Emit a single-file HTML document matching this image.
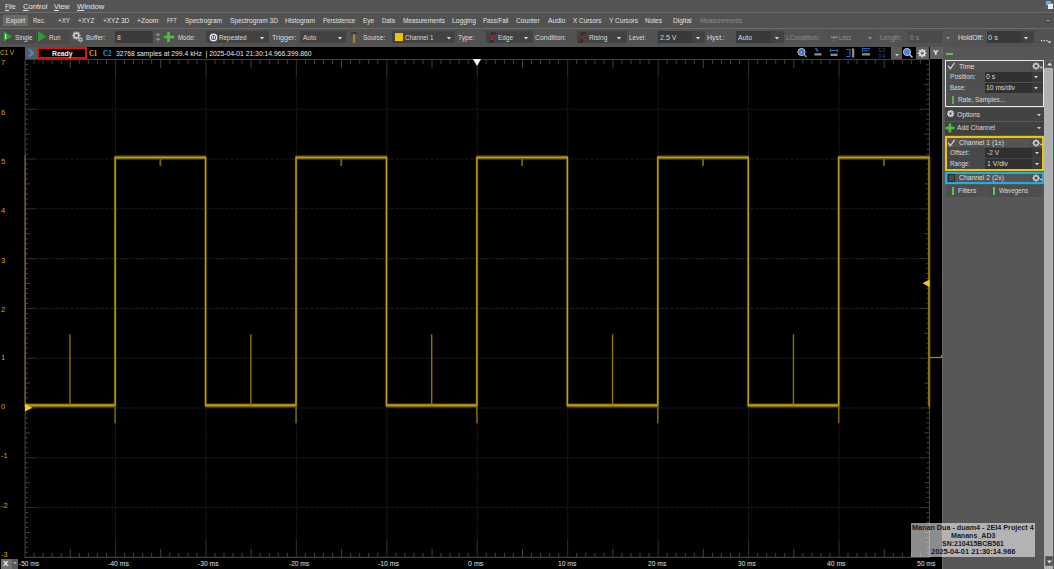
<!DOCTYPE html>
<html><head><meta charset="utf-8"><style>
html,body{margin:0;padding:0;}
body{width:1054px;height:569px;overflow:hidden;position:relative;background:#555;font-family:"Liberation Sans",sans-serif;}
.t{position:absolute;white-space:pre;line-height:1;transform-origin:0 0;}
svg{overflow:visible}
</style></head><body>
<div style="position:absolute;left:0px;top:0px;width:1054px;height:12px;background:#555555"></div><div style="position:absolute;left:0px;top:12px;width:1054px;height:1px;background:#6b6b6b"></div><div style="position:absolute;left:0px;top:13px;width:1054px;height:15px;background:#525252"></div><div style="position:absolute;left:0px;top:28px;width:1054px;height:1px;background:#6b6b6b"></div><div style="position:absolute;left:0px;top:29px;width:1054px;height:18px;background:#525252"></div><div style="position:absolute;left:1045px;top:0.5px;width:9px;height:8.5px;background:#5c5c5c"></div><div style="position:absolute;left:1046px;top:1.2px;width:5px;height:4px;background:#7fa4e0"></div><div style="position:absolute;left:1047.8px;top:3.2px;width:5px;height:4.6px;background:#e8eef8;border-top:1px solid #6b93d6"></div><div style="position:absolute;left:3px;top:15px;width:25px;height:11px;background:#6a6a6a"></div><div style="position:absolute;left:1047px;top:20px;width:2.2px;height:1.2px;background:#a8a8b0"></div><div style="position:absolute;left:2px;top:30px;width:34px;height:14px;background:#4a4a4a;border-radius:1px"></div><div style="position:absolute;left:37px;top:30px;width:33px;height:14px;background:#4a4a4a;border-radius:1px"></div><div style="position:absolute;left:115px;top:31px;width:38px;height:12px;background:#3a3a3a"></div><div style="position:absolute;left:206px;top:31px;width:63px;height:12px;background:#424242"></div><div style="position:absolute;left:300px;top:31px;width:46px;height:12px;background:#424242"></div><div style="position:absolute;left:392px;top:31px;width:63px;height:12px;background:#424242"></div><div style="position:absolute;left:394.7px;top:33px;width:8px;height:8px;background:#f2c400"></div><div style="position:absolute;left:486px;top:31px;width:46.5px;height:12px;background:#424242"></div><div style="position:absolute;left:577px;top:31px;width:49.5px;height:12px;background:#424242"></div><div style="position:absolute;left:658px;top:31px;width:34px;height:12px;background:#393939"></div><div style="position:absolute;left:692px;top:31px;width:12.5px;height:12px;background:#424242"></div><div style="position:absolute;left:736px;top:31px;width:35px;height:12px;background:#393939"></div><div style="position:absolute;left:771px;top:31px;width:12.5px;height:12px;background:#424242"></div><div style="position:absolute;left:827px;top:31px;width:49.5px;height:12px;background:#505050"></div><div style="position:absolute;left:908px;top:31px;width:34px;height:12px;background:#4a4a4a"></div><div style="position:absolute;left:942px;top:31px;width:12px;height:12px;background:#545454"></div><div style="position:absolute;left:986.5px;top:31px;width:34.5px;height:12px;background:#393939"></div><div style="position:absolute;left:1021px;top:31px;width:12.5px;height:12px;background:#424242"></div><div style="position:absolute;left:0px;top:47px;width:942px;height:522px;background:#000"></div><div style="position:absolute;left:25px;top:47px;width:12px;height:12px;background:#5a5a5a"></div><div style="position:absolute;left:37px;top:47px;width:50px;height:12px;background:#000;box-sizing:border-box;border:2px solid #e01010"></div><div style="position:absolute;left:891px;top:47px;width:11px;height:12px;background:#5a5a5a"></div><div style="position:absolute;left:916px;top:47px;width:13px;height:12px;background:#606060"></div><div style="position:absolute;left:930px;top:47px;width:12px;height:12px;background:#606060"></div><div style="position:absolute;left:942px;top:47px;width:112px;height:522px;background:#575757"></div><div style="position:absolute;left:942px;top:47px;width:1px;height:522px;background:#656565"></div><div style="position:absolute;left:946px;top:53px;width:7px;height:2px;background:#5cc04a"></div><div style="position:absolute;left:1044.2px;top:67.5px;width:8.6px;height:502px;background-color:#a6a6a6;background-image:linear-gradient(45deg,#bababa 25%,transparent 25%,transparent 75%,#bababa 75%),linear-gradient(45deg,#bababa 25%,transparent 25%,transparent 75%,#bababa 75%);background-size:2px 2px;background-position:0 0,1px 1px"></div><div style="position:absolute;left:1045px;top:60px;width:7px;height:7.5px;background:#505050;box-sizing:border-box;border:1px solid #686868"></div><div style="position:absolute;left:1044.5px;top:556px;width:8px;height:10px;background:#505050;box-sizing:border-box;border:1px solid #6a6a6a"></div><div style="position:absolute;left:945px;top:60px;width:99px;height:47px;box-sizing:border-box;border:1px solid #e8e8e8;background:#4f4f4f"></div><div style="position:absolute;left:946px;top:61px;width:97px;height:10px;background:#525252"></div><div style="position:absolute;left:1030.4px;top:62px;width:11.3px;height:7.5px;background:#4e4e4e"></div><div style="position:absolute;left:984.5px;top:71.5px;width:47px;height:10px;background:#303030"></div><div style="position:absolute;left:1031.5px;top:71.5px;width:11px;height:10px;background:#3a3a3a"></div><div style="position:absolute;left:984.5px;top:82.5px;width:47px;height:10px;background:#303030"></div><div style="position:absolute;left:1031.5px;top:82.5px;width:11px;height:10px;background:#3a3a3a"></div><div style="position:absolute;left:946px;top:94px;width:97px;height:12px;background:#505050"></div><div style="position:absolute;left:952px;top:96px;width:2px;height:8px;background:#56b046"></div><div style="position:absolute;left:945px;top:108px;width:99px;height:12.5px;background:#434343"></div><div style="position:absolute;left:945px;top:121.5px;width:99px;height:13px;background:#404040"></div><div style="position:absolute;left:945px;top:136px;width:99px;height:35px;box-sizing:border-box;border:2px solid #f0c400;background:#484848"></div><div style="position:absolute;left:947px;top:138px;width:95px;height:9px;background:#555"></div><div style="position:absolute;left:1030.4px;top:138.5px;width:11.3px;height:8px;background:#4e4e4e"></div><div style="position:absolute;left:985px;top:148px;width:47px;height:10px;background:#303030"></div><div style="position:absolute;left:1032px;top:148px;width:10px;height:10px;background:#3a3a3a"></div><div style="position:absolute;left:985px;top:159px;width:47px;height:10px;background:#303030"></div><div style="position:absolute;left:1032px;top:159px;width:10px;height:10px;background:#3a3a3a"></div><div style="position:absolute;left:945px;top:171.5px;width:99px;height:12px;box-sizing:border-box;border:2px solid #18b0e8;background:#555"></div><div style="position:absolute;left:948px;top:173.5px;width:7px;height:8px;box-sizing:border-box;border:1px solid #2a2a2a;background:#4a4a4a"></div><div style="position:absolute;left:1030.4px;top:173.5px;width:11.3px;height:8px;background:#4e4e4e"></div><div style="position:absolute;left:946px;top:185px;width:39px;height:12px;background:#4e4e4e"></div><div style="position:absolute;left:986px;top:185px;width:57px;height:12px;background:#4e4e4e"></div><div style="position:absolute;left:952px;top:186.5px;width:2px;height:8px;background:#5cc04a"></div><div style="position:absolute;left:992.5px;top:186.5px;width:2px;height:8px;background:#5cc04a"></div><div style="position:absolute;left:1px;top:559px;width:11px;height:10px;background:#707070"></div><div style="position:absolute;left:12px;top:559px;width:6px;height:10px;background:#5a5a5a"></div>
<svg style="position:absolute;left:0;top:0" width="942" height="569"><line x1="115.50" y1="76.45" x2="115.50" y2="540.35" stroke="#1a1a1a" stroke-width="1.1" stroke-dasharray="4,1"/><line x1="115.50" y1="59.45" x2="115.50" y2="76.45" stroke="#2e2e2e" stroke-width="1.1"/><line x1="115.50" y1="540.35" x2="115.50" y2="557.35" stroke="#2e2e2e" stroke-width="1.1"/><line x1="205.94" y1="76.45" x2="205.94" y2="540.35" stroke="#1a1a1a" stroke-width="1.1" stroke-dasharray="4,1"/><line x1="205.94" y1="59.45" x2="205.94" y2="76.45" stroke="#2e2e2e" stroke-width="1.1"/><line x1="205.94" y1="540.35" x2="205.94" y2="557.35" stroke="#2e2e2e" stroke-width="1.1"/><line x1="296.38" y1="76.45" x2="296.38" y2="540.35" stroke="#1a1a1a" stroke-width="1.1" stroke-dasharray="4,1"/><line x1="296.38" y1="59.45" x2="296.38" y2="76.45" stroke="#2e2e2e" stroke-width="1.1"/><line x1="296.38" y1="540.35" x2="296.38" y2="557.35" stroke="#2e2e2e" stroke-width="1.1"/><line x1="386.82" y1="76.45" x2="386.82" y2="540.35" stroke="#1a1a1a" stroke-width="1.1" stroke-dasharray="4,1"/><line x1="386.82" y1="59.45" x2="386.82" y2="76.45" stroke="#2e2e2e" stroke-width="1.1"/><line x1="386.82" y1="540.35" x2="386.82" y2="557.35" stroke="#2e2e2e" stroke-width="1.1"/><line x1="477.26" y1="76.45" x2="477.26" y2="540.35" stroke="#1a1a1a" stroke-width="1.1" stroke-dasharray="4,1"/><line x1="477.26" y1="59.45" x2="477.26" y2="76.45" stroke="#2e2e2e" stroke-width="1.1"/><line x1="477.26" y1="540.35" x2="477.26" y2="557.35" stroke="#2e2e2e" stroke-width="1.1"/><line x1="567.70" y1="76.45" x2="567.70" y2="540.35" stroke="#1a1a1a" stroke-width="1.1" stroke-dasharray="4,1"/><line x1="567.70" y1="59.45" x2="567.70" y2="76.45" stroke="#2e2e2e" stroke-width="1.1"/><line x1="567.70" y1="540.35" x2="567.70" y2="557.35" stroke="#2e2e2e" stroke-width="1.1"/><line x1="658.14" y1="76.45" x2="658.14" y2="540.35" stroke="#1a1a1a" stroke-width="1.1" stroke-dasharray="4,1"/><line x1="658.14" y1="59.45" x2="658.14" y2="76.45" stroke="#2e2e2e" stroke-width="1.1"/><line x1="658.14" y1="540.35" x2="658.14" y2="557.35" stroke="#2e2e2e" stroke-width="1.1"/><line x1="748.58" y1="76.45" x2="748.58" y2="540.35" stroke="#1a1a1a" stroke-width="1.1" stroke-dasharray="4,1"/><line x1="748.58" y1="59.45" x2="748.58" y2="76.45" stroke="#2e2e2e" stroke-width="1.1"/><line x1="748.58" y1="540.35" x2="748.58" y2="557.35" stroke="#2e2e2e" stroke-width="1.1"/><line x1="839.02" y1="76.45" x2="839.02" y2="540.35" stroke="#1a1a1a" stroke-width="1.1" stroke-dasharray="4,1"/><line x1="839.02" y1="59.45" x2="839.02" y2="76.45" stroke="#2e2e2e" stroke-width="1.1"/><line x1="839.02" y1="540.35" x2="839.02" y2="557.35" stroke="#2e2e2e" stroke-width="1.1"/><line x1="35.06" y1="109.24" x2="919.46" y2="109.24" stroke="#1a1a1a" stroke-width="1.1" stroke-dasharray="4,1"/><line x1="25.06" y1="109.24" x2="35.06" y2="109.24" stroke="#2e2e2e" stroke-width="1.1"/><line x1="919.46" y1="109.24" x2="929.46" y2="109.24" stroke="#2e2e2e" stroke-width="1.1"/><line x1="35.06" y1="159.03" x2="919.46" y2="159.03" stroke="#1a1a1a" stroke-width="1.1" stroke-dasharray="4,1"/><line x1="25.06" y1="159.03" x2="35.06" y2="159.03" stroke="#2e2e2e" stroke-width="1.1"/><line x1="919.46" y1="159.03" x2="929.46" y2="159.03" stroke="#2e2e2e" stroke-width="1.1"/><line x1="35.06" y1="208.82" x2="919.46" y2="208.82" stroke="#1a1a1a" stroke-width="1.1" stroke-dasharray="4,1"/><line x1="25.06" y1="208.82" x2="35.06" y2="208.82" stroke="#2e2e2e" stroke-width="1.1"/><line x1="919.46" y1="208.82" x2="929.46" y2="208.82" stroke="#2e2e2e" stroke-width="1.1"/><line x1="35.06" y1="258.61" x2="919.46" y2="258.61" stroke="#1a1a1a" stroke-width="1.1" stroke-dasharray="4,1"/><line x1="25.06" y1="258.61" x2="35.06" y2="258.61" stroke="#2e2e2e" stroke-width="1.1"/><line x1="919.46" y1="258.61" x2="929.46" y2="258.61" stroke="#2e2e2e" stroke-width="1.1"/><line x1="35.06" y1="308.40" x2="919.46" y2="308.40" stroke="#1a1a1a" stroke-width="1.1" stroke-dasharray="4,1"/><line x1="25.06" y1="308.40" x2="35.06" y2="308.40" stroke="#2e2e2e" stroke-width="1.1"/><line x1="919.46" y1="308.40" x2="929.46" y2="308.40" stroke="#2e2e2e" stroke-width="1.1"/><line x1="35.06" y1="358.19" x2="919.46" y2="358.19" stroke="#1a1a1a" stroke-width="1.1" stroke-dasharray="4,1"/><line x1="25.06" y1="358.19" x2="35.06" y2="358.19" stroke="#2e2e2e" stroke-width="1.1"/><line x1="919.46" y1="358.19" x2="929.46" y2="358.19" stroke="#2e2e2e" stroke-width="1.1"/><line x1="35.06" y1="407.98" x2="919.46" y2="407.98" stroke="#1a1a1a" stroke-width="1.1" stroke-dasharray="4,1"/><line x1="25.06" y1="407.98" x2="35.06" y2="407.98" stroke="#2e2e2e" stroke-width="1.1"/><line x1="919.46" y1="407.98" x2="929.46" y2="407.98" stroke="#2e2e2e" stroke-width="1.1"/><line x1="35.06" y1="457.77" x2="919.46" y2="457.77" stroke="#1a1a1a" stroke-width="1.1" stroke-dasharray="4,1"/><line x1="25.06" y1="457.77" x2="35.06" y2="457.77" stroke="#2e2e2e" stroke-width="1.1"/><line x1="919.46" y1="457.77" x2="929.46" y2="457.77" stroke="#2e2e2e" stroke-width="1.1"/><line x1="35.06" y1="507.56" x2="919.46" y2="507.56" stroke="#1a1a1a" stroke-width="1.1" stroke-dasharray="4,1"/><line x1="25.06" y1="507.56" x2="35.06" y2="507.56" stroke="#2e2e2e" stroke-width="1.1"/><line x1="919.46" y1="507.56" x2="929.46" y2="507.56" stroke="#2e2e2e" stroke-width="1.1"/><path d="M25.06,59.45 H929.46 V557.35 H25.06 Z" stroke="#404040" stroke-width="1.1" fill="none"/><path d="M34.10,59.45 v4.5 M34.10,557.35 v-4.5 M43.15,59.45 v4.5 M43.15,557.35 v-4.5 M52.19,59.45 v4.5 M52.19,557.35 v-4.5 M61.24,59.45 v4.5 M61.24,557.35 v-4.5 M70.28,59.45 v8.5 M70.28,557.35 v-8.5 M79.32,59.45 v4.5 M79.32,557.35 v-4.5 M88.37,59.45 v4.5 M88.37,557.35 v-4.5 M97.41,59.45 v4.5 M97.41,557.35 v-4.5 M106.46,59.45 v4.5 M106.46,557.35 v-4.5 M124.54,59.45 v4.5 M124.54,557.35 v-4.5 M133.59,59.45 v4.5 M133.59,557.35 v-4.5 M142.63,59.45 v4.5 M142.63,557.35 v-4.5 M151.68,59.45 v4.5 M151.68,557.35 v-4.5 M160.72,59.45 v8.5 M160.72,557.35 v-8.5 M169.76,59.45 v4.5 M169.76,557.35 v-4.5 M178.81,59.45 v4.5 M178.81,557.35 v-4.5 M187.85,59.45 v4.5 M187.85,557.35 v-4.5 M196.90,59.45 v4.5 M196.90,557.35 v-4.5 M214.98,59.45 v4.5 M214.98,557.35 v-4.5 M224.03,59.45 v4.5 M224.03,557.35 v-4.5 M233.07,59.45 v4.5 M233.07,557.35 v-4.5 M242.12,59.45 v4.5 M242.12,557.35 v-4.5 M251.16,59.45 v8.5 M251.16,557.35 v-8.5 M260.20,59.45 v4.5 M260.20,557.35 v-4.5 M269.25,59.45 v4.5 M269.25,557.35 v-4.5 M278.29,59.45 v4.5 M278.29,557.35 v-4.5 M287.34,59.45 v4.5 M287.34,557.35 v-4.5 M305.42,59.45 v4.5 M305.42,557.35 v-4.5 M314.47,59.45 v4.5 M314.47,557.35 v-4.5 M323.51,59.45 v4.5 M323.51,557.35 v-4.5 M332.56,59.45 v4.5 M332.56,557.35 v-4.5 M341.60,59.45 v8.5 M341.60,557.35 v-8.5 M350.64,59.45 v4.5 M350.64,557.35 v-4.5 M359.69,59.45 v4.5 M359.69,557.35 v-4.5 M368.73,59.45 v4.5 M368.73,557.35 v-4.5 M377.78,59.45 v4.5 M377.78,557.35 v-4.5 M395.86,59.45 v4.5 M395.86,557.35 v-4.5 M404.91,59.45 v4.5 M404.91,557.35 v-4.5 M413.95,59.45 v4.5 M413.95,557.35 v-4.5 M423.00,59.45 v4.5 M423.00,557.35 v-4.5 M432.04,59.45 v8.5 M432.04,557.35 v-8.5 M441.08,59.45 v4.5 M441.08,557.35 v-4.5 M450.13,59.45 v4.5 M450.13,557.35 v-4.5 M459.17,59.45 v4.5 M459.17,557.35 v-4.5 M468.22,59.45 v4.5 M468.22,557.35 v-4.5 M486.30,59.45 v4.5 M486.30,557.35 v-4.5 M495.35,59.45 v4.5 M495.35,557.35 v-4.5 M504.39,59.45 v4.5 M504.39,557.35 v-4.5 M513.44,59.45 v4.5 M513.44,557.35 v-4.5 M522.48,59.45 v8.5 M522.48,557.35 v-8.5 M531.52,59.45 v4.5 M531.52,557.35 v-4.5 M540.57,59.45 v4.5 M540.57,557.35 v-4.5 M549.61,59.45 v4.5 M549.61,557.35 v-4.5 M558.66,59.45 v4.5 M558.66,557.35 v-4.5 M576.74,59.45 v4.5 M576.74,557.35 v-4.5 M585.79,59.45 v4.5 M585.79,557.35 v-4.5 M594.83,59.45 v4.5 M594.83,557.35 v-4.5 M603.88,59.45 v4.5 M603.88,557.35 v-4.5 M612.92,59.45 v8.5 M612.92,557.35 v-8.5 M621.96,59.45 v4.5 M621.96,557.35 v-4.5 M631.01,59.45 v4.5 M631.01,557.35 v-4.5 M640.05,59.45 v4.5 M640.05,557.35 v-4.5 M649.10,59.45 v4.5 M649.10,557.35 v-4.5 M667.18,59.45 v4.5 M667.18,557.35 v-4.5 M676.23,59.45 v4.5 M676.23,557.35 v-4.5 M685.27,59.45 v4.5 M685.27,557.35 v-4.5 M694.32,59.45 v4.5 M694.32,557.35 v-4.5 M703.36,59.45 v8.5 M703.36,557.35 v-8.5 M712.40,59.45 v4.5 M712.40,557.35 v-4.5 M721.45,59.45 v4.5 M721.45,557.35 v-4.5 M730.49,59.45 v4.5 M730.49,557.35 v-4.5 M739.54,59.45 v4.5 M739.54,557.35 v-4.5 M757.62,59.45 v4.5 M757.62,557.35 v-4.5 M766.67,59.45 v4.5 M766.67,557.35 v-4.5 M775.71,59.45 v4.5 M775.71,557.35 v-4.5 M784.76,59.45 v4.5 M784.76,557.35 v-4.5 M793.80,59.45 v8.5 M793.80,557.35 v-8.5 M802.84,59.45 v4.5 M802.84,557.35 v-4.5 M811.89,59.45 v4.5 M811.89,557.35 v-4.5 M820.93,59.45 v4.5 M820.93,557.35 v-4.5 M829.98,59.45 v4.5 M829.98,557.35 v-4.5 M848.06,59.45 v4.5 M848.06,557.35 v-4.5 M857.11,59.45 v4.5 M857.11,557.35 v-4.5 M866.15,59.45 v4.5 M866.15,557.35 v-4.5 M875.20,59.45 v4.5 M875.20,557.35 v-4.5 M884.24,59.45 v8.5 M884.24,557.35 v-8.5 M893.28,59.45 v4.5 M893.28,557.35 v-4.5 M902.33,59.45 v4.5 M902.33,557.35 v-4.5 M911.37,59.45 v4.5 M911.37,557.35 v-4.5 M920.42,59.45 v4.5 M920.42,557.35 v-4.5 M25.06,64.43 h3 M929.46,64.43 h-3 M25.06,69.41 h3 M929.46,69.41 h-3 M25.06,74.39 h3 M929.46,74.39 h-3 M25.06,79.37 h3 M929.46,79.37 h-3 M25.06,84.34 h5 M929.46,84.34 h-5 M25.06,89.32 h3 M929.46,89.32 h-3 M25.06,94.30 h3 M929.46,94.30 h-3 M25.06,99.28 h3 M929.46,99.28 h-3 M25.06,104.26 h3 M929.46,104.26 h-3 M25.06,114.22 h3 M929.46,114.22 h-3 M25.06,119.20 h3 M929.46,119.20 h-3 M25.06,124.18 h3 M929.46,124.18 h-3 M25.06,129.16 h3 M929.46,129.16 h-3 M25.06,134.14 h5 M929.46,134.14 h-5 M25.06,139.11 h3 M929.46,139.11 h-3 M25.06,144.09 h3 M929.46,144.09 h-3 M25.06,149.07 h3 M929.46,149.07 h-3 M25.06,154.05 h3 M929.46,154.05 h-3 M25.06,164.01 h3 M929.46,164.01 h-3 M25.06,168.99 h3 M929.46,168.99 h-3 M25.06,173.97 h3 M929.46,173.97 h-3 M25.06,178.95 h3 M929.46,178.95 h-3 M25.06,183.93 h5 M929.46,183.93 h-5 M25.06,188.90 h3 M929.46,188.90 h-3 M25.06,193.88 h3 M929.46,193.88 h-3 M25.06,198.86 h3 M929.46,198.86 h-3 M25.06,203.84 h3 M929.46,203.84 h-3 M25.06,213.80 h3 M929.46,213.80 h-3 M25.06,218.78 h3 M929.46,218.78 h-3 M25.06,223.76 h3 M929.46,223.76 h-3 M25.06,228.74 h3 M929.46,228.74 h-3 M25.06,233.72 h5 M929.46,233.72 h-5 M25.06,238.69 h3 M929.46,238.69 h-3 M25.06,243.67 h3 M929.46,243.67 h-3 M25.06,248.65 h3 M929.46,248.65 h-3 M25.06,253.63 h3 M929.46,253.63 h-3 M25.06,263.59 h3 M929.46,263.59 h-3 M25.06,268.57 h3 M929.46,268.57 h-3 M25.06,273.55 h3 M929.46,273.55 h-3 M25.06,278.53 h3 M929.46,278.53 h-3 M25.06,283.50 h5 M929.46,283.50 h-5 M25.06,288.48 h3 M929.46,288.48 h-3 M25.06,293.46 h3 M929.46,293.46 h-3 M25.06,298.44 h3 M929.46,298.44 h-3 M25.06,303.42 h3 M929.46,303.42 h-3 M25.06,313.38 h3 M929.46,313.38 h-3 M25.06,318.36 h3 M929.46,318.36 h-3 M25.06,323.34 h3 M929.46,323.34 h-3 M25.06,328.32 h3 M929.46,328.32 h-3 M25.06,333.30 h5 M929.46,333.30 h-5 M25.06,338.27 h3 M929.46,338.27 h-3 M25.06,343.25 h3 M929.46,343.25 h-3 M25.06,348.23 h3 M929.46,348.23 h-3 M25.06,353.21 h3 M929.46,353.21 h-3 M25.06,363.17 h3 M929.46,363.17 h-3 M25.06,368.15 h3 M929.46,368.15 h-3 M25.06,373.13 h3 M929.46,373.13 h-3 M25.06,378.11 h3 M929.46,378.11 h-3 M25.06,383.09 h5 M929.46,383.09 h-5 M25.06,388.06 h3 M929.46,388.06 h-3 M25.06,393.04 h3 M929.46,393.04 h-3 M25.06,398.02 h3 M929.46,398.02 h-3 M25.06,403.00 h3 M929.46,403.00 h-3 M25.06,412.96 h3 M929.46,412.96 h-3 M25.06,417.94 h3 M929.46,417.94 h-3 M25.06,422.92 h3 M929.46,422.92 h-3 M25.06,427.90 h3 M929.46,427.90 h-3 M25.06,432.88 h5 M929.46,432.88 h-5 M25.06,437.85 h3 M929.46,437.85 h-3 M25.06,442.83 h3 M929.46,442.83 h-3 M25.06,447.81 h3 M929.46,447.81 h-3 M25.06,452.79 h3 M929.46,452.79 h-3 M25.06,462.75 h3 M929.46,462.75 h-3 M25.06,467.73 h3 M929.46,467.73 h-3 M25.06,472.71 h3 M929.46,472.71 h-3 M25.06,477.69 h3 M929.46,477.69 h-3 M25.06,482.67 h5 M929.46,482.67 h-5 M25.06,487.64 h3 M929.46,487.64 h-3 M25.06,492.62 h3 M929.46,492.62 h-3 M25.06,497.60 h3 M929.46,497.60 h-3 M25.06,502.58 h3 M929.46,502.58 h-3 M25.06,512.54 h3 M929.46,512.54 h-3 M25.06,517.52 h3 M929.46,517.52 h-3 M25.06,522.50 h3 M929.46,522.50 h-3 M25.06,527.48 h3 M929.46,527.48 h-3 M25.06,532.46 h5 M929.46,532.46 h-5 M25.06,537.43 h3 M929.46,537.43 h-3 M25.06,542.41 h3 M929.46,542.41 h-3 M25.06,547.39 h3 M929.46,547.39 h-3 M25.06,552.37 h3 M929.46,552.37 h-3" stroke="#404040" stroke-width="1" fill="none"/></svg><svg style="position:absolute;left:0;top:0" width="942" height="569"><path d="M25.06,405.40 H115.15 M115.15,157.50 H205.59 M205.59,405.40 H296.03 M296.03,157.50 H386.47 M386.47,405.40 H476.91 M476.91,157.50 H567.35 M567.35,405.40 H657.79 M657.79,157.50 H748.23 M748.23,405.40 H838.67 M838.67,157.50 H929.11" stroke="#4a3e00" stroke-width="5" fill="none" opacity="0.75"/><path d="M115.15,156.50 V406.40 M205.59,156.50 V406.40 M296.03,156.50 V406.40 M386.47,156.50 V406.40 M476.91,156.50 V406.40 M567.35,156.50 V406.40 M657.79,156.50 V406.40 M748.23,156.50 V406.40 M838.67,156.50 V406.40 M929.11,156.50 V406.40" stroke="#3a3000" stroke-width="3" fill="none" opacity="0.6"/><path d="M25.06,405.40 H115.15 M115.15,157.50 H205.59 M205.59,405.40 H296.03 M296.03,157.50 H386.47 M386.47,405.40 H476.91 M476.91,157.50 H567.35 M567.35,405.40 H657.79 M657.79,157.50 H748.23 M748.23,405.40 H838.67 M838.67,157.50 H929.11" stroke="#c2a000" stroke-width="2.2" fill="none"/><path d="M115.15,156.50 V406.40 M205.59,156.50 V406.40 M296.03,156.50 V406.40 M386.47,156.50 V406.40 M476.91,156.50 V406.40 M567.35,156.50 V406.40 M657.79,156.50 V406.40 M748.23,156.50 V406.40 M838.67,156.50 V406.40 M929.11,156.50 V406.40" stroke="#c2a000" stroke-width="1.5" fill="none"/><rect x="24.6" y="155" width="1.1" height="252" fill="#8c7400"/><rect x="929.0" y="157" width="1.1" height="252" fill="#8c7400"/><rect x="114.35" y="405.4" width="1.6" height="17.8" fill="#7a6400"/><rect x="295.23" y="405.4" width="1.6" height="17.8" fill="#7a6400"/><rect x="476.11" y="405.4" width="1.6" height="17.8" fill="#7a6400"/><rect x="656.99" y="405.4" width="1.6" height="17.8" fill="#7a6400"/><rect x="837.87" y="405.4" width="1.6" height="17.8" fill="#7a6400"/><rect x="69.23" y="334.3" width="1.4" height="71.1" fill="#8c7300"/><rect x="159.47" y="158.5" width="1.8" height="7.5" fill="#7a6400"/><rect x="250.11" y="334.3" width="1.4" height="71.1" fill="#8c7300"/><rect x="340.35" y="158.5" width="1.8" height="7.5" fill="#7a6400"/><rect x="430.99" y="334.3" width="1.4" height="71.1" fill="#8c7300"/><rect x="521.23" y="158.5" width="1.8" height="7.5" fill="#7a6400"/><rect x="611.87" y="334.3" width="1.4" height="71.1" fill="#8c7300"/><rect x="702.11" y="158.5" width="1.8" height="7.5" fill="#7a6400"/><rect x="792.75" y="334.3" width="1.4" height="71.1" fill="#8c7300"/><rect x="882.99" y="158.5" width="1.8" height="7.5" fill="#7a6400"/><polygon points="25,404 32.5,407.8 25,411.5" fill="#f2cc10"/><polygon points="929.5,279.5 922.6,283.2 929.5,287" fill="#f2cc10"/><polygon points="472.9,59 481.1,59 477,66" fill="#f4f4f4"/><rect x="929.5" y="356.9" width="12.3" height="1.2" fill="#b09000"/><rect x="940.8" y="355" width="1.1" height="3" fill="#b09000"/></svg>
<svg style="position:absolute;left:0;top:28px" width="200" height="20"><polygon points="3.5,3 12,8.5 3.5,14" fill="#2f9a2f"/><rect x="5" y="6" width="1.2" height="5" fill="#d8f0d8"/><polygon points="38,3 46.5,8.5 38,14" fill="#2f9a2f"/></svg><svg style="position:absolute;left:1040px;top:38px" width="14" height="8"><rect x="1" y="2" width="1.3" height="1.3" fill="#d8d8d8"/><rect x="3.6" y="2" width="1.3" height="1.3" fill="#d8d8d8"/><rect x="6.2" y="2" width="1.3" height="1.3" fill="#d8d8d8"/><polygon points="7.5,3.2 11.5,3.2 9.5,5.5" fill="#d8d8d8"/></svg><svg style="position:absolute;left:258px;top:34.5px" width="8" height="6"><polygon points="1.7999999999999998,1.9 6.2,1.9 4,4.3999999999999995" fill="#d8d8d8"/></svg><svg style="position:absolute;left:336px;top:34.5px" width="8" height="6"><polygon points="1.7999999999999998,1.9 6.2,1.9 4,4.3999999999999995" fill="#d8d8d8"/></svg><svg style="position:absolute;left:444.5px;top:34.5px" width="8" height="6"><polygon points="1.7999999999999998,1.9 6.2,1.9 4,4.3999999999999995" fill="#d8d8d8"/></svg><svg style="position:absolute;left:522px;top:34.5px" width="8" height="6"><polygon points="1.7999999999999998,1.9 6.2,1.9 4,4.3999999999999995" fill="#d8d8d8"/></svg><svg style="position:absolute;left:615px;top:34.5px" width="8" height="6"><polygon points="1.7999999999999998,1.9 6.2,1.9 4,4.3999999999999995" fill="#d8d8d8"/></svg><svg style="position:absolute;left:694px;top:34.5px" width="8" height="6"><polygon points="1.7999999999999998,1.9 6.2,1.9 4,4.3999999999999995" fill="#d8d8d8"/></svg><svg style="position:absolute;left:772.5px;top:34.5px" width="8" height="6"><polygon points="1.7999999999999998,1.9 6.2,1.9 4,4.3999999999999995" fill="#d8d8d8"/></svg><svg style="position:absolute;left:866px;top:34.5px" width="8" height="6"><polygon points="1.7999999999999998,1.9 6.2,1.9 4,4.3999999999999995" fill="#8e8e8e"/></svg><svg style="position:absolute;left:944px;top:34.5px" width="8" height="6"><polygon points="1.7999999999999998,1.9 6.2,1.9 4,4.3999999999999995" fill="#8e8e8e"/></svg><svg style="position:absolute;left:1022px;top:34.5px" width="8" height="6"><polygon points="1.7999999999999998,1.9 6.2,1.9 4,4.3999999999999995" fill="#d8d8d8"/></svg><svg style="position:absolute;left:154px;top:31px" width="8" height="12"><polygon points="1.5,4.5 6.5,4.5 4,2" fill="#9a9a9a"/><polygon points="1.5,7.5 6.5,7.5 4,10" fill="#9a9a9a"/></svg><svg style="position:absolute;left:163px;top:31px" width="12" height="12"><rect x="4.2" y="1" width="2.6" height="10" fill="#4cc23a"/><rect x="1" y="4.7" width="10" height="2.6" fill="#4cc23a"/></svg><svg style="position:absolute;left:72px;top:31px" width="12" height="13"><rect x="3.6" y="0.5" width="1.6" height="8" fill="#cacaca" transform="rotate(0 4.4 4.5)"/><rect x="3.6" y="0.5" width="1.6" height="8" fill="#cacaca" transform="rotate(45 4.4 4.5)"/><rect x="3.6" y="0.5" width="1.6" height="8" fill="#cacaca" transform="rotate(90 4.4 4.5)"/><rect x="3.6" y="0.5" width="1.6" height="8" fill="#cacaca" transform="rotate(135 4.4 4.5)"/><circle cx="4.4" cy="4.5" r="3" fill="#cacaca"/><circle cx="4.4" cy="4.5" r="1.5" fill="#525252"/><rect x="7.9" y="6.3" width="1.2" height="5" fill="#b8b8b8" transform="rotate(0 8.5 8.8)"/><rect x="7.9" y="6.3" width="1.2" height="5" fill="#b8b8b8" transform="rotate(60 8.5 8.8)"/><rect x="7.9" y="6.3" width="1.2" height="5" fill="#b8b8b8" transform="rotate(120 8.5 8.8)"/><circle cx="8.5" cy="8.8" r="1.8" fill="#b8b8b8"/><circle cx="8.5" cy="8.8" r="0.8" fill="#525252"/></svg><svg style="position:absolute;left:209px;top:33px" width="9" height="9"><circle cx="4.5" cy="4.5" r="3.9" fill="#e8e8e8"/><circle cx="4.5" cy="4.5" r="2.6" fill="#2a66c8"/><rect x="3.3" y="3" width="0.8" height="3" fill="#fff"/><rect x="4.9" y="3" width="0.8" height="3" fill="#fff"/></svg><svg style="position:absolute;left:349px;top:31px" width="10" height="13"><rect x="2" y="1" width="6" height="3" fill="#3a3a3a"/><rect x="4" y="3" width="2.2" height="9" fill="#a8823a"/></svg><svg style="position:absolute;left:488px;top:32px" width="9" height="11"><path d="M1,10 L4,10 L4,1 L8,1" stroke="#222" stroke-width="1.2" fill="none"/><rect x="3.2" y="3" width="1.8" height="5" fill="#d01818"/></svg><svg style="position:absolute;left:578px;top:32px" width="9" height="11"><path d="M0.5,10 L4,10 L4,1 L8,1" stroke="#222" stroke-width="1.2" fill="none"/><circle cx="4" cy="5.5" r="1.3" fill="#d01818"/></svg><svg style="position:absolute;left:830px;top:32px" width="9" height="11"><rect x="1" y="4.5" width="7" height="1.5" fill="#8a8a8a"/><rect x="3.5" y="6" width="1" height="4" fill="#707070"/></svg><svg style="position:absolute;left:27px;top:48px" width="8" height="10"><path d="M1.8,1.5 L5.8,5 L1.8,8.5" stroke="#3b8cf0" stroke-width="2" fill="none"/></svg><svg style="position:absolute;left:790px;top:47px" width="152" height="13"><circle cx="11.5" cy="5" r="3.6" fill="#3a6ab8" stroke="#b8c8e0" stroke-width="1"/><path d="M11,3.5 L11.5,6 L10.5,6.5" stroke="#c8d8f0" stroke-width="0.8" fill="none"/><path d="M14,7.5 L16.5,10" stroke="#a0a0a0" stroke-width="1.3"/><rect x="24.5" y="6.2" width="7" height="2.3" fill="#8a8a8a"/><path d="M25.5,1 L28,4.5" stroke="#1a68c8" stroke-width="1.6"/><rect x="40.5" y="6.7" width="7" height="2.3" fill="#8a8a8a"/><path d="M40.5,2 L40.5,5 M47.5,2 L47.5,5 M40.5,3.5 L47.5,3.5" stroke="#1a68c8" stroke-width="1.2"/><rect x="62" y="1.5" width="2.3" height="9" fill="#8a8a8a"/><path d="M56,2.5 L60,2.5 L60,9.5 L56,9.5" stroke="#1a68c8" stroke-width="1.2" fill="none"/><rect x="72" y="6.2" width="8" height="2.3" fill="#8a8a8a"/><path d="M72.5,0.5 L72.5,4.5 M72.5,1.5 L80,1.5 M72.5,3.8 L79,3.8" stroke="#1a68c8" stroke-width="1" fill="none"/><text x="88.5" y="5" font-family="Liberation Sans" font-size="4.8" fill="#1a68c8">1 2</text><text x="88.5" y="10.5" font-family="Liberation Sans" font-size="4.8" fill="#1a68c8">3 4</text></svg><svg style="position:absolute;left:892.5px;top:52px" width="8" height="6"><polygon points="2,2.0 6,2.0 4,4.3" fill="#d0d0d0"/></svg><svg style="position:absolute;left:902px;top:47px" width="12" height="13"><circle cx="5" cy="5" r="3.6" fill="#4a82d8" stroke="#c0d0e8" stroke-width="0.9"/><path d="M7.5,7.5 L10.5,10.5" stroke="#c8c8c8" stroke-width="1.4"/></svg><svg style="position:absolute;left:918px;top:49px" width="8.4" height="8.4"><rect x="3.3000000000000003" y="0" width="1.8" height="8.4" fill="#dadada" transform="rotate(0 4.2 4.2)"/><rect x="3.3000000000000003" y="0" width="1.8" height="8.4" fill="#dadada" transform="rotate(45 4.2 4.2)"/><rect x="3.3000000000000003" y="0" width="1.8" height="8.4" fill="#dadada" transform="rotate(90 4.2 4.2)"/><rect x="3.3000000000000003" y="0" width="1.8" height="8.4" fill="#dadada" transform="rotate(135 4.2 4.2)"/><circle cx="4.2" cy="4.2" r="2.94" fill="#dadada"/><circle cx="4.2" cy="4.2" r="1.344" fill="#606060"/></svg><svg style="position:absolute;left:1045px;top:60px" width="9" height="8"><polygon points="2,5.5 7,5.5 4.5,2.5" fill="#e0e0e0"/></svg><svg style="position:absolute;left:1045px;top:558px" width="9" height="8"><polygon points="2,2.5 7,2.5 4.5,5.5" fill="#e0e0e0"/></svg><svg style="position:absolute;left:947px;top:62px" width="9" height="9"><path d="M1.2,3.8 L3.3,6.8 L7.6,0.8" stroke="#e6e6e6" stroke-width="1.1" fill="none"/></svg><svg style="position:absolute;left:1032px;top:74px" width="8" height="6"><polygon points="2,2.0 6,2.0 4,4.3" fill="#d8d8d8"/></svg><svg style="position:absolute;left:1032px;top:85px" width="8" height="6"><polygon points="2,2.0 6,2.0 4,4.3" fill="#d8d8d8"/></svg><svg style="position:absolute;left:947px;top:110px" width="7.2" height="7.2"><rect x="2.7" y="0" width="1.8" height="7.2" fill="#cfcfcf" transform="rotate(0 3.6 3.6)"/><rect x="2.7" y="0" width="1.8" height="7.2" fill="#cfcfcf" transform="rotate(45 3.6 3.6)"/><rect x="2.7" y="0" width="1.8" height="7.2" fill="#cfcfcf" transform="rotate(90 3.6 3.6)"/><rect x="2.7" y="0" width="1.8" height="7.2" fill="#cfcfcf" transform="rotate(135 3.6 3.6)"/><circle cx="3.6" cy="3.6" r="2.52" fill="#cfcfcf"/><circle cx="3.6" cy="3.6" r="1.1520000000000001" fill="#434343"/></svg><svg style="position:absolute;left:1035px;top:111.5px" width="8" height="6"><polygon points="2,2.0 6,2.0 4,4.3" fill="#d0d0d0"/></svg><svg style="position:absolute;left:945px;top:123px" width="10" height="10"><rect x="3.6" y="0.5" width="2.6" height="9" fill="#4cc23a"/><rect x="0.5" y="3.7" width="9" height="2.6" fill="#4cc23a"/></svg><svg style="position:absolute;left:1035px;top:125px" width="8" height="6"><polygon points="2,2.0 6,2.0 4,4.3" fill="#d0d0d0"/></svg><svg style="position:absolute;left:947px;top:139px" width="9" height="9"><path d="M1.2,3.8 L3.3,6.8 L7.6,0.8" stroke="#e6e6e6" stroke-width="1.1" fill="none"/></svg><svg style="position:absolute;left:1032.5px;top:149.5px" width="8" height="6"><polygon points="2,2.0 6,2.0 4,4.3" fill="#d8d8d8"/></svg><svg style="position:absolute;left:1032.5px;top:160.5px" width="8" height="6"><polygon points="2,2.0 6,2.0 4,4.3" fill="#d8d8d8"/></svg><svg style="position:absolute;left:1032px;top:62px" width="12" height="9"><rect x="3.4" y="0.3" width="1.4" height="7.4" fill="#cfcfcf" transform="rotate(0 4.1 4)"/><rect x="3.4" y="0.3" width="1.4" height="7.4" fill="#cfcfcf" transform="rotate(45 4.1 4)"/><rect x="3.4" y="0.3" width="1.4" height="7.4" fill="#cfcfcf" transform="rotate(90 4.1 4)"/><rect x="3.4" y="0.3" width="1.4" height="7.4" fill="#cfcfcf" transform="rotate(135 4.1 4)"/><circle cx="4.1" cy="4" r="2.7" fill="#cfcfcf"/><circle cx="4.1" cy="4" r="1.5" fill="#3a4a5a"/><polygon points="7.6,4.8 10.8,4.8 9.2,6.8" fill="#d8d8d8"/></svg><svg style="position:absolute;left:1032px;top:138.5px" width="12" height="9"><rect x="3.4" y="0.3" width="1.4" height="7.4" fill="#cfcfcf" transform="rotate(0 4.1 4)"/><rect x="3.4" y="0.3" width="1.4" height="7.4" fill="#cfcfcf" transform="rotate(45 4.1 4)"/><rect x="3.4" y="0.3" width="1.4" height="7.4" fill="#cfcfcf" transform="rotate(90 4.1 4)"/><rect x="3.4" y="0.3" width="1.4" height="7.4" fill="#cfcfcf" transform="rotate(135 4.1 4)"/><circle cx="4.1" cy="4" r="2.7" fill="#cfcfcf"/><circle cx="4.1" cy="4" r="1.5" fill="#3a4a5a"/><polygon points="7.6,4.8 10.8,4.8 9.2,6.8" fill="#d8d8d8"/></svg><svg style="position:absolute;left:1032px;top:173.5px" width="12" height="9"><rect x="3.4" y="0.3" width="1.4" height="7.4" fill="#cfcfcf" transform="rotate(0 4.1 4)"/><rect x="3.4" y="0.3" width="1.4" height="7.4" fill="#cfcfcf" transform="rotate(45 4.1 4)"/><rect x="3.4" y="0.3" width="1.4" height="7.4" fill="#cfcfcf" transform="rotate(90 4.1 4)"/><rect x="3.4" y="0.3" width="1.4" height="7.4" fill="#cfcfcf" transform="rotate(135 4.1 4)"/><circle cx="4.1" cy="4" r="2.7" fill="#cfcfcf"/><circle cx="4.1" cy="4" r="1.5" fill="#3a4a5a"/><polygon points="7.6,4.8 10.8,4.8 9.2,6.8" fill="#d8d8d8"/></svg><svg style="position:absolute;left:11px;top:559.5px" width="8" height="6"><polygon points="2.4,2.2 5.6,2.2 4,4.1" fill="#c8c8c8"/></svg>
<div class="t" style="left:5.20px;top:2.53px;font-size:8px;font-weight:normal;color:#e6e6e6;transform:scaleX(0.8378);"><u>F</u>ile</div><div class="t" style="left:22.80px;top:2.53px;font-size:8px;font-weight:normal;color:#e6e6e6;transform:scaleX(0.9497);"><u>C</u>ontrol</div><div class="t" style="left:54.30px;top:2.53px;font-size:8px;font-weight:normal;color:#e6e6e6;transform:scaleX(0.9010);"><u>V</u>iew</div><div class="t" style="left:76.80px;top:2.53px;font-size:8px;font-weight:normal;color:#e6e6e6;transform:scaleX(0.9560);"><u>W</u>indow</div><div class="t" style="left:6.20px;top:16.53px;font-size:8px;font-weight:normal;color:#e0e0e0;transform:scaleX(0.8259);">Export</div><div class="t" style="left:32.70px;top:16.53px;font-size:8px;font-weight:normal;color:#e0e0e0;transform:scaleX(0.7476);">Rec.</div><div class="t" style="left:58.00px;top:16.53px;font-size:8px;font-weight:normal;color:#e0e0e0;transform:scaleX(0.7821);">+XY</div><div class="t" style="left:78.40px;top:16.53px;font-size:8px;font-weight:normal;color:#e0e0e0;transform:scaleX(0.8105);">+XYZ</div><div class="t" style="left:102.80px;top:16.53px;font-size:8px;font-weight:normal;color:#e0e0e0;transform:scaleX(0.8015);">+XYZ 3D</div><div class="t" style="left:137.30px;top:16.53px;font-size:8px;font-weight:normal;color:#e0e0e0;transform:scaleX(0.8557);">+Zoom</div><div class="t" style="left:166.70px;top:16.53px;font-size:8px;font-weight:normal;color:#e0e0e0;transform:scaleX(0.6748);">FFT</div><div class="t" style="left:185.00px;top:16.53px;font-size:8px;font-weight:normal;color:#e0e0e0;transform:scaleX(0.8079);">Spectrogram</div><div class="t" style="left:230.00px;top:16.53px;font-size:8px;font-weight:normal;color:#e0e0e0;transform:scaleX(0.8240);">Spectrogram 3D</div><div class="t" style="left:285.00px;top:16.53px;font-size:8px;font-weight:normal;color:#e0e0e0;transform:scaleX(0.8230);">Histogram</div><div class="t" style="left:323.30px;top:16.53px;font-size:8px;font-weight:normal;color:#e0e0e0;transform:scaleX(0.7704);">Persistence</div><div class="t" style="left:363.00px;top:16.53px;font-size:8px;font-weight:normal;color:#e0e0e0;transform:scaleX(0.7973);">Eye</div><div class="t" style="left:381.50px;top:16.53px;font-size:8px;font-weight:normal;color:#e0e0e0;transform:scaleX(0.7689);">Data</div><div class="t" style="left:402.60px;top:16.53px;font-size:8px;font-weight:normal;color:#e0e0e0;transform:scaleX(0.7917);">Measurements</div><div class="t" style="left:452.00px;top:16.53px;font-size:8px;font-weight:normal;color:#e0e0e0;transform:scaleX(0.8426);">Logging</div><div class="t" style="left:483.40px;top:16.53px;font-size:8px;font-weight:normal;color:#e0e0e0;transform:scaleX(0.7719);">Pass/Fail</div><div class="t" style="left:516.40px;top:16.53px;font-size:8px;font-weight:normal;color:#e0e0e0;transform:scaleX(0.8290);">Counter</div><div class="t" style="left:547.60px;top:16.53px;font-size:8px;font-weight:normal;color:#e0e0e0;transform:scaleX(0.8501);">Audio</div><div class="t" style="left:572.60px;top:16.53px;font-size:8px;font-weight:normal;color:#e0e0e0;transform:scaleX(0.7986);">X Cursors</div><div class="t" style="left:608.50px;top:16.53px;font-size:8px;font-weight:normal;color:#e0e0e0;transform:scaleX(0.8187);">Y Cursors</div><div class="t" style="left:645.00px;top:16.53px;font-size:8px;font-weight:normal;color:#e0e0e0;transform:scaleX(0.8132);">Notes</div><div class="t" style="left:673.30px;top:16.53px;font-size:8px;font-weight:normal;color:#e0e0e0;transform:scaleX(0.8365);">Digital</div><div class="t" style="left:700.00px;top:16.53px;font-size:8px;font-weight:normal;color:#8c8c8c;transform:scaleX(0.7936);">Measurements</div><div class="t" style="left:14.50px;top:34.23px;font-size:8px;font-weight:normal;color:#dcdcdc;transform:scaleX(0.7865);">Single</div><div class="t" style="left:48.50px;top:34.23px;font-size:8px;font-weight:normal;color:#dcdcdc;transform:scaleX(0.7830);">Run</div><div class="t" style="left:86.00px;top:34.23px;font-size:8px;font-weight:normal;color:#dcdcdc;transform:scaleX(0.8112);">Buffer:</div><div class="t" style="left:117.00px;top:34.23px;font-size:8px;font-weight:normal;color:#dcdcdc;transform:scaleX(0.8533);">8</div><div class="t" style="left:178.00px;top:34.23px;font-size:8px;font-weight:normal;color:#dcdcdc;transform:scaleX(0.7646);">Mode:</div><div class="t" style="left:218.50px;top:34.23px;font-size:8px;font-weight:normal;color:#dcdcdc;transform:scaleX(0.7924);">Repeated</div><div class="t" style="left:271.60px;top:34.23px;font-size:8px;font-weight:normal;color:#dcdcdc;transform:scaleX(0.8949);">Trigger:</div><div class="t" style="left:302.70px;top:34.23px;font-size:8px;font-weight:normal;color:#dcdcdc;transform:scaleX(0.8076);">Auto</div><div class="t" style="left:362.80px;top:34.23px;font-size:8px;font-weight:normal;color:#dcdcdc;transform:scaleX(0.8050);">Source:</div><div class="t" style="left:404.60px;top:34.23px;font-size:8px;font-weight:normal;color:#dcdcdc;transform:scaleX(0.7784);">Channel 1</div><div class="t" style="left:457.50px;top:34.23px;font-size:8px;font-weight:normal;color:#dcdcdc;transform:scaleX(0.8428);">Type:</div><div class="t" style="left:498.00px;top:34.23px;font-size:8px;font-weight:normal;color:#dcdcdc;transform:scaleX(0.8027);">Edge</div><div class="t" style="left:535.00px;top:34.23px;font-size:8px;font-weight:normal;color:#dcdcdc;transform:scaleX(0.8604);">Condition:</div><div class="t" style="left:588.50px;top:34.23px;font-size:8px;font-weight:normal;color:#dcdcdc;transform:scaleX(0.8320);">Rising</div><div class="t" style="left:629.00px;top:34.23px;font-size:8px;font-weight:normal;color:#dcdcdc;transform:scaleX(0.7959);">Level:</div><div class="t" style="left:659.50px;top:34.23px;font-size:8px;font-weight:normal;color:#dcdcdc;transform:scaleX(0.8829);">2.5 V</div><div class="t" style="left:707.00px;top:34.23px;font-size:8px;font-weight:normal;color:#dcdcdc;transform:scaleX(0.8801);">Hyst.:</div><div class="t" style="left:738.00px;top:34.23px;font-size:8px;font-weight:normal;color:#dcdcdc;transform:scaleX(0.8501);">Auto</div><div class="t" style="left:785.50px;top:34.23px;font-size:8px;font-weight:normal;color:#8e8e8e;transform:scaleX(0.8275);">LCondition:</div><div class="t" style="left:839.00px;top:34.23px;font-size:8px;font-weight:normal;color:#8e8e8e;transform:scaleX(0.7098);">Less</div><div class="t" style="left:879.60px;top:34.23px;font-size:8px;font-weight:normal;color:#8e8e8e;transform:scaleX(0.8164);">Length:</div><div class="t" style="left:910.00px;top:34.23px;font-size:8px;font-weight:normal;color:#8e8e8e;transform:scaleX(0.8433);">0 s</div><div class="t" style="left:957.50px;top:34.23px;font-size:8px;font-weight:normal;color:#e0e0e0;transform:scaleX(0.8732);">HoldOff:</div><div class="t" style="left:988.00px;top:34.23px;font-size:8px;font-weight:normal;color:#dcdcdc;transform:scaleX(0.9370);">0 s</div><div class="t" style="left:51.50px;top:49.93px;font-size:8px;font-weight:bold;color:#f2f2f2;transform:scaleX(0.8536);">Ready</div><div class="t" style="font-family:'Liberation Serif',serif;left:89.00px;top:49.83px;font-size:8px;font-weight:bold;color:#e0b800;transform:scaleX(0.8383);">C1</div><div class="t" style="font-family:'Liberation Serif',serif;left:102.80px;top:49.83px;font-size:8px;font-weight:bold;color:#10a8e8;transform:scaleX(0.8588);">C2</div><div class="t" style="left:116.00px;top:49.93px;font-size:8px;font-weight:normal;color:#e6e6e6;transform:scaleX(0.8462);">32768 samples at 299.4 kHz  | 2025-04-01 21:30:14.966.399.860</div><div class="t" style="left:0.00px;top:49.03px;font-size:8px;font-weight:normal;color:#d8b000;transform:scaleX(0.7867);">C1 V</div><div class="t" style="left:933.00px;top:49.23px;font-size:8px;font-weight:bold;color:#f0f0f0;transform:scaleX(1.0292);">Y</div><div class="t" style="left:959.00px;top:62.83px;font-size:8px;font-weight:normal;color:#dcdcdc;transform:scaleX(0.8865);">Time</div><div class="t" style="left:949.50px;top:72.83px;font-size:8px;font-weight:normal;color:#dcdcdc;transform:scaleX(0.8310);">Position:</div><div class="t" style="left:986.00px;top:72.83px;font-size:8px;font-weight:normal;color:#dcdcdc;transform:scaleX(0.8433);">0 s</div><div class="t" style="left:949.50px;top:83.83px;font-size:8px;font-weight:normal;color:#dcdcdc;transform:scaleX(0.7573);">Base:</div><div class="t" style="left:986.00px;top:83.83px;font-size:8px;font-weight:normal;color:#dcdcdc;transform:scaleX(0.8471);">10 ms/div</div><div class="t" style="left:958.00px;top:95.83px;font-size:8px;font-weight:normal;color:#dcdcdc;transform:scaleX(0.7947);">Rate, Samples...</div><div class="t" style="left:957.00px;top:110.83px;font-size:8px;font-weight:normal;color:#dcdcdc;transform:scaleX(0.8340);">Options</div><div class="t" style="left:957.00px;top:124.23px;font-size:8px;font-weight:normal;color:#dcdcdc;transform:scaleX(0.8213);">Add Channel</div><div class="t" style="left:959.00px;top:139.03px;font-size:8px;font-weight:normal;color:#dcdcdc;transform:scaleX(0.8511);">Channel 1 (1±)</div><div class="t" style="left:949.50px;top:148.83px;font-size:8px;font-weight:normal;color:#dcdcdc;transform:scaleX(0.8326);">Offset:</div><div class="t" style="left:987.00px;top:148.83px;font-size:8px;font-weight:normal;color:#dcdcdc;transform:scaleX(0.8179);">-2 V</div><div class="t" style="left:949.50px;top:159.83px;font-size:8px;font-weight:normal;color:#dcdcdc;transform:scaleX(0.7753);">Range:</div><div class="t" style="left:987.00px;top:159.83px;font-size:8px;font-weight:normal;color:#dcdcdc;transform:scaleX(0.8582);">1 V/div</div><div class="t" style="left:959.00px;top:173.83px;font-size:8px;font-weight:normal;color:#dcdcdc;transform:scaleX(0.8511);">Channel 2 (2±)</div><div class="t" style="left:958.00px;top:186.83px;font-size:8px;font-weight:normal;color:#dcdcdc;transform:scaleX(0.8494);">Filters</div><div class="t" style="left:999.00px;top:186.83px;font-size:8px;font-weight:normal;color:#dcdcdc;transform:scaleX(0.7733);">Wavegens</div><div class="t" style="left:1.00px;top:59.28px;font-size:8px;font-weight:normal;color:#d8aa00;transform:scaleX(0.9432);">7</div><div class="t" style="left:1.00px;top:109.07px;font-size:8px;font-weight:normal;color:#d8aa00;transform:scaleX(0.9432);">6</div><div class="t" style="left:1.00px;top:158.26px;font-size:8px;font-weight:normal;color:#d8aa00;transform:scaleX(0.9432);">5</div><div class="t" style="left:1.00px;top:207.35px;font-size:8px;font-weight:normal;color:#d8aa00;transform:scaleX(0.9432);">4</div><div class="t" style="left:1.00px;top:256.54px;font-size:8px;font-weight:normal;color:#d8aa00;transform:scaleX(0.9432);">3</div><div class="t" style="left:1.00px;top:305.53px;font-size:8px;font-weight:normal;color:#d8aa00;transform:scaleX(0.9432);">2</div><div class="t" style="left:1.00px;top:354.42px;font-size:8px;font-weight:normal;color:#d8aa00;transform:scaleX(0.9432);">1</div><div class="t" style="left:1.00px;top:403.41px;font-size:8px;font-weight:normal;color:#d8aa00;transform:scaleX(0.9432);">0</div><div class="t" style="left:1.00px;top:451.70px;font-size:8px;font-weight:normal;color:#d8aa00;transform:scaleX(0.9123);">-1</div><div class="t" style="left:1.00px;top:501.59px;font-size:8px;font-weight:normal;color:#d8aa00;transform:scaleX(0.9123);">-2</div><div class="t" style="left:1.00px;top:550.98px;font-size:8px;font-weight:normal;color:#d8aa00;transform:scaleX(0.9123);">-3</div><div class="t" style="left:19.00px;top:560.03px;font-size:8px;font-weight:normal;color:#e0e0e0;transform:scaleX(0.8179);">-50 ms</div><div class="t" style="left:108.20px;top:560.03px;font-size:8px;font-weight:normal;color:#e0e0e0;transform:scaleX(0.8506);">-40 ms</div><div class="t" style="left:198.10px;top:560.03px;font-size:8px;font-weight:normal;color:#e0e0e0;transform:scaleX(0.8383);">-30 ms</div><div class="t" style="left:288.60px;top:560.03px;font-size:8px;font-weight:normal;color:#e0e0e0;transform:scaleX(0.8179);">-20 ms</div><div class="t" style="left:377.80px;top:560.03px;font-size:8px;font-weight:normal;color:#e0e0e0;transform:scaleX(0.8547);">-10 ms</div><div class="t" style="left:467.70px;top:560.03px;font-size:8px;font-weight:normal;color:#e0e0e0;transform:scaleX(0.8822);">0 ms</div><div class="t" style="left:557.70px;top:560.03px;font-size:8px;font-weight:normal;color:#e0e0e0;transform:scaleX(0.8396);">10 ms</div><div class="t" style="left:647.70px;top:560.03px;font-size:8px;font-weight:normal;color:#e0e0e0;transform:scaleX(0.8396);">20 ms</div><div class="t" style="left:738.00px;top:560.03px;font-size:8px;font-weight:normal;color:#e0e0e0;transform:scaleX(0.8166);">30 ms</div><div class="t" style="left:827.40px;top:560.03px;font-size:8px;font-weight:normal;color:#e0e0e0;transform:scaleX(0.8442);">40 ms</div><div class="t" style="left:917.00px;top:560.03px;font-size:8px;font-weight:normal;color:#e0e0e0;transform:scaleX(0.8396);">50 ms</div><div class="t" style="left:3.00px;top:560.23px;font-size:8px;font-weight:bold;color:#f0f0f0;transform:scaleX(1.0292);">X</div>
<div style="position:absolute;left:911px;top:522.5px;width:124px;height:34px;background:rgba(255,255,255,0.55)"></div>
<div class="t" style="left:912.15px;top:524.25px;font-size:7.5px;font-weight:bold;color:#1a1a22;transform:scaleX(0.9605);">Manan Dua - duam4 - 2EI4 Project 4</div><div class="t" style="left:950.75px;top:532.25px;font-size:7.5px;font-weight:bold;color:#1a1a22;transform:scaleX(0.9446);">Manans_AD3</div><div class="t" style="left:942.00px;top:540.25px;font-size:7.5px;font-weight:bold;color:#1a1a22;transform:scaleX(0.9293);">SN:210415BCB561</div><div class="t" style="left:930.75px;top:548.25px;font-size:7.5px;font-weight:bold;color:#1a1a22;transform:scaleX(0.9932);">2025-04-01 21:30:14.966</div>
</body></html>
